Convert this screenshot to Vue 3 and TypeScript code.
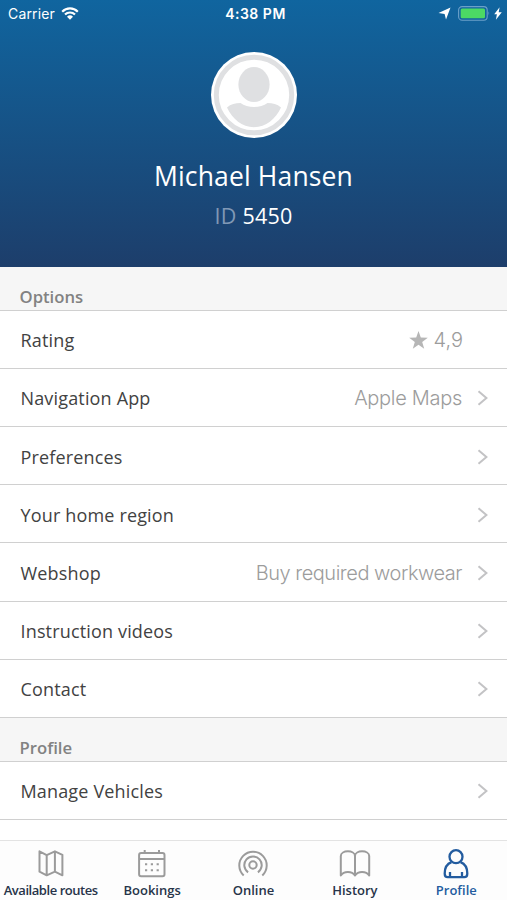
<script setup lang="ts">
interface Row {
  label: string
  value?: string
  star?: boolean
  link: boolean
}
interface Section {
  title: string
  rows: Row[]
}

const sections: Section[] = [
  {
    title: 'Options',
    rows: [
      { label: 'Rating', value: '4,9', star: true, link: false },
      { label: 'Navigation App', value: 'Apple Maps', link: true },
      { label: 'Preferences', link: true },
      { label: 'Your home region', link: true },
      { label: 'Webshop', value: 'Buy required workwear', link: true },
      { label: 'Instruction videos', link: true },
      { label: 'Contact', link: true },
    ],
  },
  { title: 'Profile', rows: [{ label: 'Manage Vehicles', link: true }] },
]

const tabs = [
  { id: 'routes', label: 'Available routes' },
  { id: 'bookings', label: 'Bookings' },
  { id: 'online', label: 'Online' },
  { id: 'history', label: 'History' },
  { id: 'profile', label: 'Profile' },
]
const active = 'profile'
</script>

<template>
  <div class="screen">
    <header class="hero">
      <div class="status">
        <div class="carrier">
          <span>Carrier</span>
          <svg width="18" height="13" viewBox="0 0 18 13">
            <g fill="none" stroke="#fff" stroke-width="2.2">
              <path d="M1.200 4.700a11 11 0 0 1 15.600 0" />
              <path d="M4 7.600a7 7 0 0 1 10 0" />
            </g>
            <path d="M6 9.700a4.300 4.300 0 0 1 6 0L9 12.800z" fill="#fff" />
          </svg>
        </div>
        <span class="time">4:38 PM</span>
        <div class="power">
          <svg width="13" height="13" viewBox="0 0 13 13"><path d="M12.500.5L8 12.500 6.600 7 .5 6z" fill="#fff" /></svg>
          <svg class="battery" width="33" height="15" viewBox="0 0 33 15">
            <rect x=".6" y=".6" width="28.600" height="13.600" rx="3.500" fill="none" stroke="#6ba0c9" stroke-width="1.100" />
            <rect x="2.700" y="2.600" width="24.300" height="9.600" rx="1.500" fill="#4cd964" />
            <path d="M30.500 5.200q1.800 2.200 0 4.400z" fill="#6ba0c9" />
          </svg>
          <svg width="8" height="13" viewBox="0 0 8 13"><path d="M5.600.2L.2 7.300h2.700L1.900 12.800l5.900-7.500H4.700z" fill="#fff" /></svg>
        </div>
      </div>
      <svg class="avatar" width="86" height="86" viewBox="0 0 86 86">
        <circle cx="43" cy="43" r="43" fill="#fff" />
        <circle cx="43" cy="43" r="37.700" fill="none" stroke="#dfe0e2" stroke-width="5" />
        <ellipse cx="43" cy="32.500" rx="15.600" ry="17.500" fill="#dfe0e2" />
        <path d="M16 55.500c3.800-3.500 8.400-4.500 13.500-4.500 7 5.300 20 5.300 27 0 5.100 0 9.700 1 13.500 4.500C64.500 67 55 75.200 43 75.200S21.500 67 16 55.500z" fill="#dfe0e2" />
      </svg>
      <h1>Michael Hansen</h1>
      <p class="ident"><span>ID</span> 5450</p>
    </header>

    <main class="list">
      <section v-for="section in sections" :key="section.title">
        <h2>{{ section.title }}</h2>
        <div v-for="row in section.rows" :key="row.label" class="row">
          <span class="label">{{ row.label }}</span>
          <svg v-if="row.star" class="star" width="19" height="18" viewBox="0 0 19 18">
            <path d="M9.500 0l2.300 6.500 7 .2-5.600 4.200 2 6.800-5.700-4-5.700 4 2-6.800L.2 6.700l7-.2z" fill="#b6b6b6" />
          </svg>
          <span v-if="row.value" class="value" :class="{ rating: row.star, long: row.value.length > 12 }">{{ row.value }}</span>
          <svg class="chevron" width="12" height="16" viewBox="0 0 12 16">
            <path v-if="row.link" d="M1.500 1.300L9.400 8l-7.900 6.700" fill="none" stroke="#c3c3c5" stroke-width="2" />
          </svg>
        </div>
      </section>
    </main>

    <nav class="tabs">
      <div v-for="tab in tabs" :key="tab.id" class="tab" :class="[tab.id, { active: tab.id === active }]">
        <svg width="32" height="32" viewBox="0 0 32 32" fill="none" stroke="currentColor" stroke-width="2" stroke-linejoin="round">
          <path v-if="tab.id === 'routes'" d="M4.500 3.300l7.200 3.800 8.200-3.800 7.500 3.500v20.500l-7.500-3.600-8.200 3.600-7.200-3.600zM11.700 7v20.300M19.900 3.300v20.400" />
          <g v-else-if="tab.id === 'bookings'">
            <rect x="3.100" y="4.900" width="25.400" height="23.300" rx="2" />
            <path d="M3.100 11h25.400M8.700 2v3M23 2v3" />
            <path d="M9 16.300h2.200M14.800 16.300H17M20.600 16.300h2.200M9 22.300h2.200M14.800 22.300H17M20.600 22.300h2.200" />
          </g>
          <g v-else-if="tab.id === 'online'">
            <circle cx="16" cy="17" r="3.700" />
            <path d="M11.100 24.300a8.700 8.700 0 1 1 9.800 0M6.700 27.500a13.700 13.700 0 1 1 18.600 0" />
          </g>
          <path v-else-if="tab.id === 'history'" d="M16 27.500V8c0-6.200-14.200-6.200-14.200 0v19.500c3-4.600 11.200-4.600 14.200 0 3-4.600 11.200-4.600 14.200 0V8C30.200 1.800 16 1.800 16 8" />
          <g v-else stroke-width="2.300">
            <circle cx="16" cy="8.700" r="6.500" />
            <path d="M11.500 14.200C6.700 16 4.700 20.200 4.700 25.500c0 2.800.8 3.700 3 3.700h16.600c2.200 0 3-.9 3-3.700 0-5.300-2-9.500-6.800-11.300M10 24v5M22 24v5" />
          </g>
        </svg>
        <span>{{ tab.label }}</span>
      </div>
    </nav>
  </div>
</template>

<style>
body {
  margin: 0;
}
</style>

<style scoped>
.screen {
  width: 507px;
  height: 900px;
  display: flex;
  flex-direction: column;
  overflow: hidden;
  background: #fff;
  font-family: "Open Sans", sans-serif;
  color: #424242;
}
.hero {
  flex: none;
  height: 267px;
  display: flex;
  flex-direction: column;
  align-items: center;
  background: linear-gradient(#10659f, #1d3e6b);
  color: #fff;
}
.status {
  width: 100%;
  height: 27px;
  padding: 0 5px 0 8px;
  box-sizing: border-box;
  display: grid;
  grid-template-columns: 1fr auto 1fr;
  align-items: center;
  font: 14px/27px Inter, sans-serif;
}
.carrier {
  display: flex;
  align-items: center;
  gap: 6px;
  letter-spacing: 0.15px;
}
.time {
  font-weight: 600;
  letter-spacing: 0.5px;
  padding-left: 1px;
}
.power {
  display: flex;
  justify-content: flex-end;
  align-items: center;
}
.battery {
  margin: 0 3px 0 7px;
}
.avatar {
  margin-top: 25px;
}
h1 {
  margin: 19px 0 0;
  font-size: 26.500px;
  line-height: 38px;
  font-weight: 400;
  letter-spacing: 0.150px;
}
.ident {
  margin: 6px 0 0;
  font-size: 21.500px;
  line-height: 30px;
  letter-spacing: 0.250px;
}
.ident span {
  color: #8098b5;
}
.list {
  flex: 1;
  min-height: 0;
  overflow: hidden;
}
h2 {
  height: 43.700px;
  margin: 0;
  padding: 16px 19.500px 0;
  box-sizing: border-box;
  border-bottom: 1px solid #d0d0d0;
  background: #f6f6f6;
  color: #828282;
  font-size: 16.700px;
  line-height: 28px;
  font-weight: 600;
}
.row {
  height: 58.200px;
  padding: 2px 18px 0 20.500px;
  box-sizing: border-box;
  display: flex;
  align-items: center;
  border-bottom: 1px solid #d0d0d0;
  font-size: 18px;
}
.label {
  flex: 1;
  letter-spacing: 0.160px;
}
.value {
  font-family: Inter, sans-serif;
  font-weight: 300;
  font-size: 20px;
  letter-spacing: -0.300px;
  color: #9c9c9c;
}
.value.long {
  letter-spacing: -0.470px;
}
.value.rating {
  letter-spacing: 0;
}
.star {
  margin-right: 6px;
}
.chevron {
  margin-left: 15px;
}
.rating + .chevron {
  margin-left: 14px;
}
.tabs {
  flex: none;
  height: 60px;
  box-sizing: border-box;
  border-top: 1px solid #e3e3e3;
  background: #fdfdfd;
  display: grid;
  grid-template-columns: repeat(5, 1fr);
}
.tab {
  padding-top: 7px;
  display: flex;
  flex-direction: column;
  align-items: center;
  color: #9b9b9b;
}
.tab svg {
  flex: none;
}
.tab span {
  font-size: 13px;
  line-height: 18px;
  margin-top: 1px;
  font-weight: 600;
  white-space: nowrap;
  color: #273449;
}
.tab.routes span {
  letter-spacing: -0.450px;
}
.tab.active,
.tab.active span {
  color: #235c9f;
}
</style>
